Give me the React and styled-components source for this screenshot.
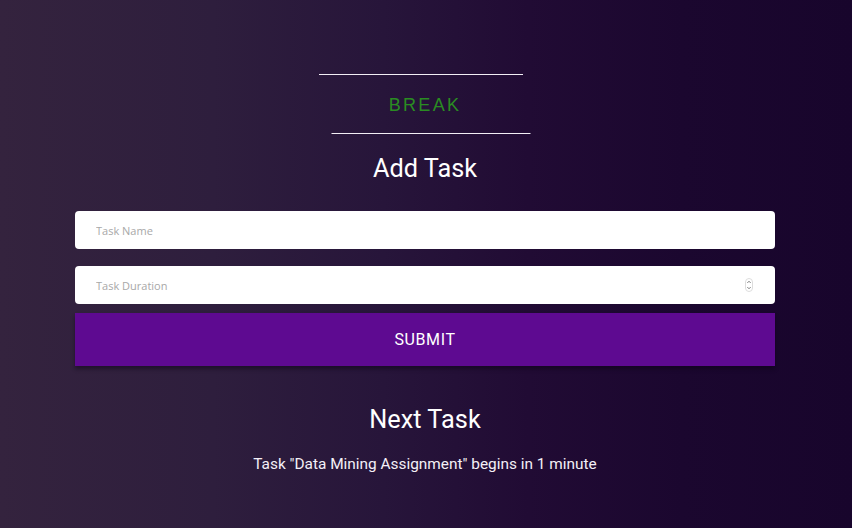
import styled, { createGlobalStyle } from 'styled-components';

const GlobalStyle = createGlobalStyle`
  html, body {
    margin: 0;
    padding: 0;
    height: 100%;
  }
  body {
    font-family: Roboto, "Liberation Sans", sans-serif;
    background: linear-gradient(
      to right,
      #34233e 0%,
      #2e1e3d 25%,
      #27153a 45%,
      #210b34 62%,
      #1b072f 80%,
      #18052c 100%
    );
    color: #fff;
  }
`;

export default function App() {
  return (
    <Page>
      <GlobalStyle />
      <Timer>
        <Rule width={204} shift={-4} />
        <Status>BREAK</Status>
        <Rule width={199} shift={5.5} />
      </Timer>
      <Heading>Add Task</Heading>
      <Form onSubmit={(e) => e.preventDefault()}>
        <Input type="text" placeholder="Task Name" />
        <Field>
          <Input type="number" placeholder="Task Duration" />
          <Spinner viewBox="0 0 8 14">
            <rect x="0.5" y="0.5" width="7" height="13" rx="3.5" fill="#fff" stroke="#ddd" />
            <path d="M2.3 5 L4 3.2 L5.7 5" fill="none" stroke="#777" strokeWidth="0.9" />
            <path d="M2.3 9 L4 10.8 L5.7 9" fill="none" stroke="#777" strokeWidth="0.9" />
          </Spinner>
        </Field>
        <Button type="submit">SUBMIT</Button>
      </Form>
      <SubHeading>Next Task</SubHeading>
      <Notice>Task "Data Mining Assignment" begins in 1 minute</Notice>
    </Page>
  );
}

const Page = styled.div`
  width: 850px;
  height: 528px;
  display: flex;
  flex-direction: column;
  align-items: center;
  padding-top: 74px;
  box-sizing: border-box;
`;

const Timer = styled.div`
  display: flex;
  flex-direction: column;
  align-items: center;
`;

const Rule = styled.div`
  width: ${(p) => p.width}px;
  height: 1px;
  background: #f2eef5;
  transform: translateX(${(p) => p.shift}px);
`;

const Status = styled.div`
  height: 58px;
  display: flex;
  align-items: center;
  justify-content: center;
  font-family: "Liberation Sans", Arial, sans-serif;
  font-size: 18px;
  letter-spacing: 2.3px;
  color: #2a8c22;
  padding-top: 2px;
  box-sizing: border-box;
`;

const Heading = styled.h2`
  margin: 18px 0 0;
  font-size: 25.3px;
  font-weight: 400;
  line-height: 34px;
`;

const SubHeading = styled(Heading)`
  margin-top: 37px;
`;

const Form = styled.form`
  width: 700px;
  margin-top: 25px;
  display: flex;
  flex-direction: column;
`;

const Field = styled.div`
  position: relative;
  margin-top: 17px;
`;

const Input = styled.input`
  width: 100%;
  height: 38px;
  box-sizing: border-box;
  border: none;
  border-radius: 4px;
  padding: 0 21px;
  font-family: "Open Sans", "Liberation Sans", sans-serif;
  font-size: 11px;
  color: #333;
  background: #fff;
  outline: none;
  -moz-appearance: textfield;

  &::placeholder {
    color: #a8a8a8;
  }
  &::-webkit-inner-spin-button,
  &::-webkit-outer-spin-button {
    -webkit-appearance: none;
    margin: 0;
  }
`;

const Spinner = styled.svg`
  position: absolute;
  right: 22px;
  top: 12px;
  width: 8px;
  height: 14px;
`;

const Button = styled.button`
  margin-top: 9px;
  height: 53px;
  border: none;
  background: #5e0a91;
  color: #fff;
  font-family: Roboto, "Liberation Sans", sans-serif;
  font-size: 16px;
  font-weight: 400;
  letter-spacing: 0.6px;
  box-shadow: 0 3px 4px rgba(10, 0, 20, 0.45);
  cursor: pointer;
`;

const Notice = styled.p`
  margin: 15px 0 0;
  font-size: 15.4px;
  line-height: 24px;
  color: #f4f0f7;
`;
